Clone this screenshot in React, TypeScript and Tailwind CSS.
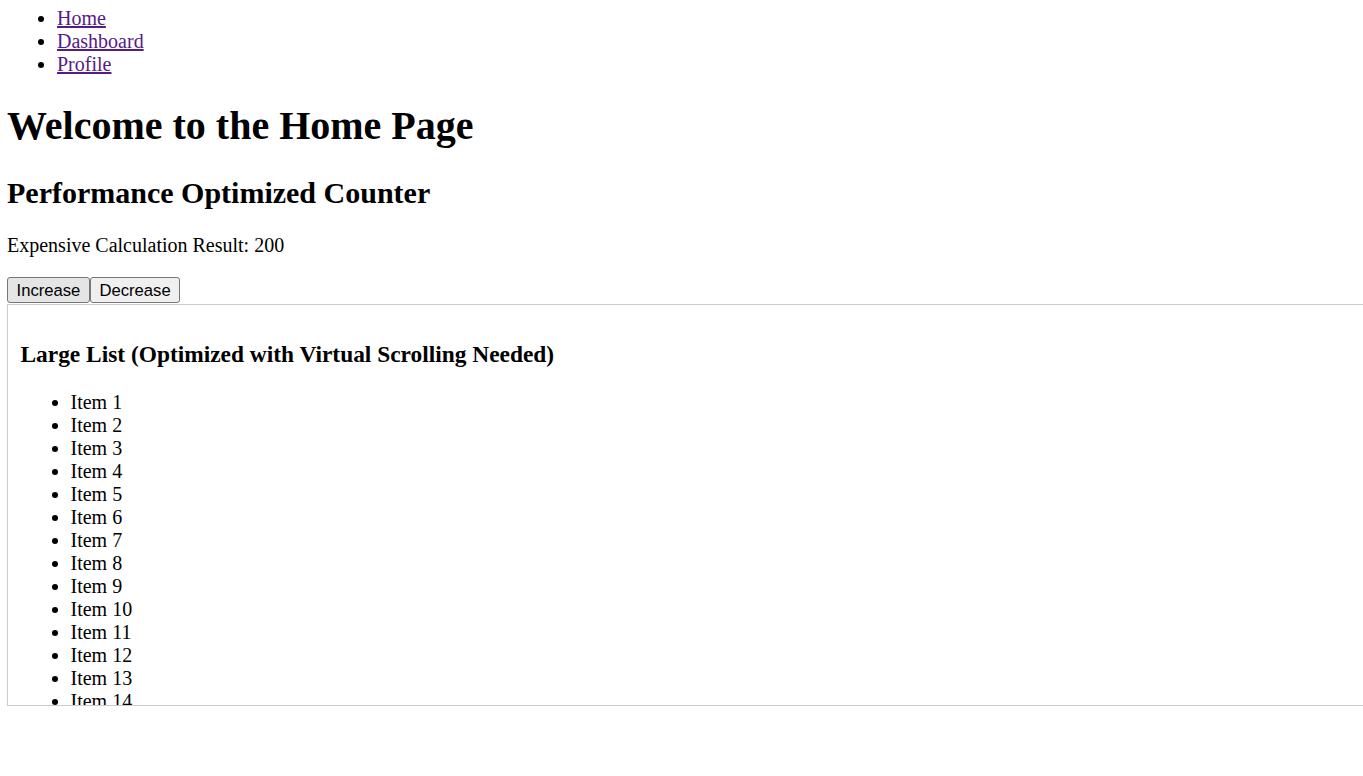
export default function App() {
  const items = Array.from({ length: 20 }, (_, i) => i + 1);
  return (
    <div
      className="w-[1363px] h-[776px] overflow-hidden bg-white text-black p-[7px] text-[20px] leading-[1.149]"
      style={{ fontFamily: '"Liberation Serif", "Times New Roman", serif' }}
    >
      <ul className="list-disc pl-[50px] m-0">
        {["Home", "Dashboard", "Profile"].map((t) => (
          <li key={t}>
            <a href="#" className="text-[#551a8b] underline">
              {t}
            </a>
          </li>
        ))}
      </ul>
      <h1 className="text-[40px] font-bold leading-[1.149] mt-[27px] mb-[27px]">
        Welcome to the Home Page
      </h1>
      <h2 className="text-[30px] font-bold leading-[1.149] mb-[24px]">
        Performance Optimized Counter
      </h2>
      <p className="mb-[20px]">Expensive Calculation Result: 200</p>
      <div
        className="flex text-[16.67px] leading-[19px]"
        style={{ fontFamily: '"Liberation Sans", Arial, sans-serif' }}
      >
        <button className="bg-[#e5e5e5] border border-[#767676] rounded-[3px] px-[8.5px] py-[2.5px]">
          Increase
        </button>
        <button className="bg-[#efefef] border border-[#767676] rounded-[3px] px-[8.5px] py-[2.5px]">
          Decrease
        </button>
      </div>
      <div className="mt-[1px] w-[1376px] h-[402px] border border-[#cccccc] px-[12.5px] pt-[12.5px] overflow-hidden">
        <h3 className="text-[23.4px] font-bold leading-[1.149] mt-[23.4px] mb-[23.4px]">
          Large List (Optimized with Virtual Scrolling Needed)
        </h3>
        <ul className="list-disc pl-[50px]">
          {items.map((n) => (
            <li key={n}>Item {n}</li>
          ))}
        </ul>
      </div>
    </div>
  );
}
